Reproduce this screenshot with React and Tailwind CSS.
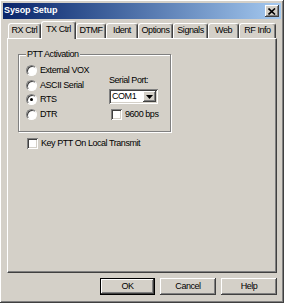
import React from 'react';

const TABS = [
  { label: 'RX Ctrl', w: 'w-[33px]' },
  { label: 'TX Ctrl', w: 'w-[35px]', active: true },
  { label: 'DTMF', w: 'w-[30px]' },
  { label: 'Ident', w: 'w-[32px]' },
  { label: 'Options', w: 'w-[35px]' },
  { label: 'Signals', w: 'w-[35px]' },
  { label: 'Web', w: 'w-[31px]' },
  { label: 'RF Info', w: 'w-[37px]' },
];

const raised = 'shadow-[inset_-1px_-1px_#404040,inset_1px_1px_#ffffff,inset_-2px_-2px_#808080,inset_2px_2px_#d4d0c8]';
const sunken = 'shadow-[inset_1px_1px_#808080,inset_-1px_-1px_#ffffff,inset_2px_2px_#404040,inset_-2px_-2px_#d4d0c8]';

const Radio = ({ label, checked }) => (
  <div className="flex items-center h-[14.5px]">
    <span className="relative w-[11px] h-[11px] rounded-full bg-white border border-t-[#808080] border-l-[#808080] border-b-white border-r-white shadow-[inset_1px_1px_#404040] flex items-center justify-center">
      {checked && <span className="w-[3px] h-[3px] rounded-full bg-black" />}
    </span>
    <span className="ml-[3px]">{label}</span>
  </div>
);

const Check = ({ label, className = '' }) => (
  <div className={`flex items-center whitespace-nowrap ${className}`}>
    <span className={`shrink-0 w-[11px] h-[11px] bg-white ${sunken}`} />
    <span className="ml-[3px]">{label}</span>
  </div>
);

export default function App() {
  return (
    <div
      className={`w-[284px] h-[303px] p-[3px] flex flex-col bg-[#d4d0c8] text-black text-[9px] tracking-[-0.45px] ${raised}`}
      style={{ fontFamily: '"Liberation Sans", Arial, sans-serif' }}
    >
      {/* title bar */}
      <div className="h-[16px] flex items-center justify-between pl-[1px] pr-[2px] bg-gradient-to-r from-[#0a246a] to-[#a6caf0]">
        <span className="text-white font-bold text-[9px] tracking-[-0.1px]">Sysop Setup</span>
        <span className={`w-[14px] h-[12px] flex items-center justify-center bg-[#d4d0c8] ${raised}`}>
          <svg width="8" height="7" viewBox="0 0 8 7">
            <path d="M0.5 0.5 L7 6.5 M7 0.5 L0.5 6.5" stroke="#000" strokeWidth="1.6" />
          </svg>
        </span>
      </div>

      {/* tabs */}
      <div className="mt-[2px] h-[17px] flex items-end pl-[5px] relative z-10">
        {TABS.map(t => (
          <div
            key={t.label}
            className={`${t.w} flex items-center justify-center rounded-t-[3px] border-l border-t border-white border-r border-r-[#404040] shadow-[inset_-1px_0_#808080] bg-[#d4d0c8] ${t.active ? 'h-[18px] -mb-[1px] pb-[2px]' : 'h-[15px]'}`}
          >
            {t.label}
          </div>
        ))}
      </div>

      {/* panel */}
      <div className="mx-[4px] h-[235px] border-l border-t border-white border-r border-b border-r-[#404040] border-b-[#404040] shadow-[inset_-1px_-1px_#808080] pt-[15px] pl-[10px]">
        <div className="relative w-[153px] h-[78px] border border-[#808080] shadow-[1px_1px_#ffffff,inset_1px_1px_#ffffff] flex">
          <span className="absolute -top-[6px] left-[7px] px-[1px] bg-[#d4d0c8] leading-[10px]">PTT Activation</span>
          <div className="flex flex-col pt-[8.5px] pl-[7px]">
            <Radio label="External VOX" />
            <Radio label="ASCII Serial" />
            <Radio label="RTS" checked />
            <Radio label="DTR" />
          </div>
          <div className="flex flex-col ml-auto mr-[12px] pt-[20px] w-[49px]">
            <span className="leading-[10px] whitespace-nowrap">Serial Port:</span>
            <div className={`mt-[4px] h-[15px] bg-white flex items-center ${sunken}`}>
              <span className="pl-[3px] flex-1">COM1</span>
              <span className={`w-[13px] h-[11px] mr-[2px] flex items-center justify-center bg-[#d4d0c8] ${raised}`}>
                <svg width="7" height="4" viewBox="0 0 7 4"><path d="M0 0 H7 L3.5 4 Z" fill="#000" /></svg>
              </span>
            </div>
            <Check label="9600 bps" className="mt-[4px] ml-[2px]" />
          </div>
        </div>
        <Check label="Key PTT On Local Transmit" className="mt-[5px] ml-[9px]" />
      </div>

      {/* buttons */}
      <div className="mt-[5px] flex justify-end gap-[5px] pr-[4px]">
        <button className={`w-[55px] h-[17px] bg-[#d4d0c8] border border-black ${raised}`}>OK</button>
        <button className={`w-[56px] h-[17px] bg-[#d4d0c8] ${raised}`}>Cancel</button>
        <button className={`w-[56px] h-[17px] bg-[#d4d0c8] ${raised}`}>Help</button>
      </div>
    </div>
  );
}
